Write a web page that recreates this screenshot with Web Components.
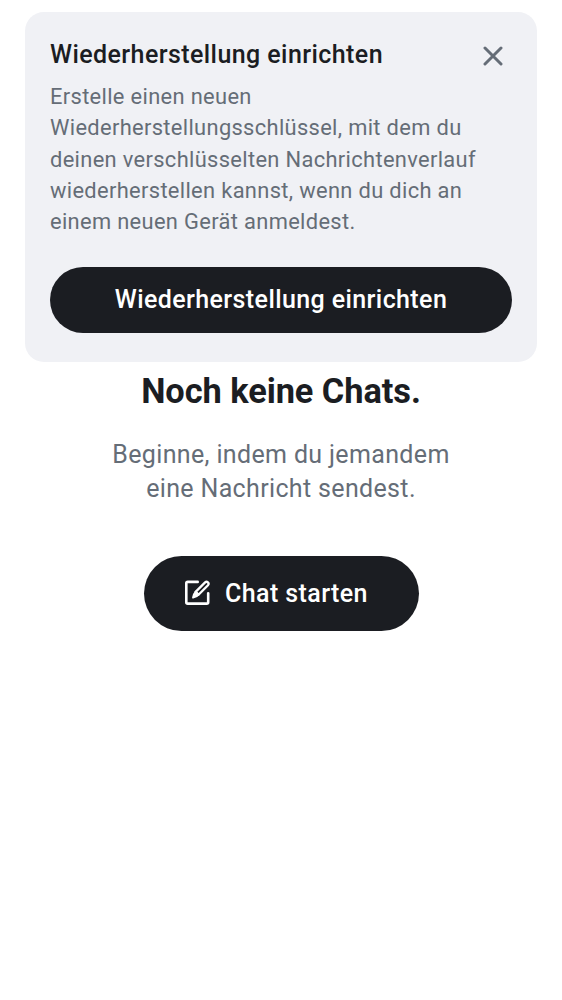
<!DOCTYPE html>
<html lang="de"><head><meta charset="utf-8"><title>Chats</title>
<style>html,body{margin:0;height:100%;background:#fff}body{font-family:Roboto,sans-serif;overflow:hidden}</style></head>
<body>
<chat-screen></chat-screen>
<script>
const define=(name,html)=>customElements.define(name,class extends HTMLElement{
  constructor(){super();this.attachShadow({mode:'open'}).innerHTML=html;}
});
define('close-icon',`<style>:host{display:block;width:20px;height:20px}svg{display:block}</style>
<svg width="20" height="20" viewBox="0 0 20 20" fill="none" stroke="#656d77" stroke-width="3" stroke-linecap="round"><path d="M2 2 18 18M18 2 2 18"/></svg>`);
define('compose-icon',`<style>:host{display:block;width:25px;height:25px}svg{display:block;overflow:visible}</style>
<svg width="25" height="25" viewBox="0 0 25 25" fill="none" stroke="#fff" stroke-width="2.6" stroke-linecap="round" stroke-linejoin="round"><path d="M12.7 1.9H2.7Q1.3 1.9 1.3 3.3V22.2Q1.3 23.6 2.7 23.6H21.8Q23.2 23.6 23.2 22.2V13.2"/><path d="M10.6 11.9 20.1 2.4Q21.5 1.1 22.9 2.4 24.3 3.8 23 5.2L13.5 14.7Z" stroke-width="2.3"/><path d="M10.6 11.9 13.5 14.7Q11.9 16.9 8.1 17.5 8.6 14 10.6 11.9Z" fill="#fff" stroke-width="2"/></svg>`);
define('pill-button',`<style>:host{display:flex;align-items:center;justify-content:center;box-sizing:border-box;border-radius:40px;background:#1b1d22;color:#fff;font-weight:500;font-size:25px;line-height:36px;letter-spacing:.4px;white-space:nowrap}</style><slot name="icon"></slot><slot></slot>`);
define('setup-banner',`<style>
:host{display:block;box-sizing:border-box;height:349.8px;padding:25px;border-radius:19px;background:#f0f1f5}
header{display:flex;justify-content:space-between;height:35px}
h2{margin:-.4px 0 0;font-size:25px;line-height:35px;font-weight:500;color:#1b1d22;letter-spacing:.42px;white-space:nowrap}
close-icon{margin:8.5px 8.6px 0 0}
p{margin:8.75px 0 29.15px;font-size:21.875px;line-height:31.25px;letter-spacing:.34px;color:#656d77;white-space:nowrap}
pill-button{height:66px}
</style><header><h2>Wiederherstellung einrichten</h2><close-icon></close-icon></header>
<p>Erstelle einen neuen<br>Wiederherstellungsschlüssel, mit dem du<br>deinen verschlüsselten Nachrichtenverlauf<br>wiederherstellen kannst, wenn du dich an<br>einem neuen Gerät anmeldest.</p>
<pill-button>Wiederherstellung einrichten</pill-button>`);
define('empty-state',`<style>
:host{display:flex;flex-direction:column;align-items:center;text-align:center}
h1{margin:7.1px 0 0;font-size:34.375px;line-height:44px;font-weight:700;color:#1b1d22;white-space:nowrap;letter-spacing:-.06px}
p{margin:24.4px 0 49.5px;font-size:25px;line-height:34.4px;letter-spacing:.35px;color:#656d77;white-space:nowrap}
pill-button{width:275px;height:75px;padding:.6px 9px 0 0}
compose-icon{margin:-2px 15px 0 0}
</style><h1>Noch keine Chats.</h1><p>Beginne, indem du jemandem<br>eine Nachricht sendest.</p>
<pill-button><compose-icon slot="icon"></compose-icon>Chat starten</pill-button>`);
define('chat-screen',`<style>:host{display:flex;flex-direction:column;box-sizing:border-box;height:100%;padding:12.4px 25px}</style><setup-banner></setup-banner><empty-state></empty-state>`);
</script></body></html>
